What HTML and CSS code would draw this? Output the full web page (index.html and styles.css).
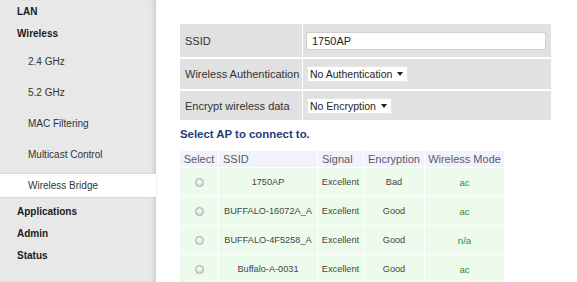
FILE: index.html
```html
<!DOCTYPE html>
<html>
<head>
<meta charset="utf-8">
<link rel="stylesheet" href="styles.css">
</head>
<body>
<div class="page">
  <nav class="sidebar">
    <div class="nav-top">LAN</div>
    <div class="nav-top">Wireless</div>
    <div class="subnav">
      <div class="nav-sub">2.4 GHz</div>
      <div class="nav-sub">5.2 GHz</div>
      <div class="nav-sub">MAC Filtering</div>
      <div class="nav-sub">Multicast Control</div>
      <div class="nav-sub active">Wireless Bridge</div>
    </div>
    <div class="nav-top">Applications</div>
    <div class="nav-top">Admin</div>
    <div class="nav-top">Status</div>
  </nav>
  <main class="main">
    <table class="form">
      <tr class="r1">
        <td class="label">SSID</td>
        <td class="value"><div class="input">1750AP</div></td>
      </tr>
      <tr class="r2">
        <td class="label">Wireless Authentication</td>
        <td class="value"><div class="select sel-auth"><span>No Authentication</span><svg width="6" height="4" viewBox="0 0 6 4"><path d="M0 0H6L3 4Z" fill="#222"/></svg></div></td>
      </tr>
      <tr class="r3">
        <td class="label">Encrypt wireless data</td>
        <td class="value"><div class="select sel-enc"><span>No Encryption</span><svg width="6" height="4" viewBox="0 0 6 4"><path d="M0 0H6L3 4Z" fill="#222"/></svg></div></td>
      </tr>
    </table>
    <h2 class="heading">Select AP to connect to.</h2>
    <table class="aps">
      <colgroup>
        <col class="c-sel"><col class="c-ssid"><col class="c-sig"><col class="c-enc"><col class="c-mode">
      </colgroup>
      <thead>
        <tr><th>Select</th><th class="left">SSID</th><th class="left">Signal</th><th>Encryption</th><th>Wireless Mode</th></tr>
      </thead>
      <tbody>
        <tr><td><span class="radio"></span></td><td>1750AP</td><td>Excellent</td><td>Bad</td><td class="mode">ac</td></tr>
        <tr><td><span class="radio"></span></td><td>BUFFALO-16072A_A</td><td>Excellent</td><td>Good</td><td class="mode">ac</td></tr>
        <tr><td><span class="radio"></span></td><td>BUFFALO-4F5258_A</td><td>Excellent</td><td>Good</td><td class="mode">n/a</td></tr>
        <tr><td><span class="radio"></span></td><td>Buffalo-A-0031</td><td>Excellent</td><td>Good</td><td class="mode">ac</td></tr>
      </tbody>
    </table>
  </main>
</div>
</body>
</html>
```
FILE: styles.css
```css
html, body {
  margin: 0;
  padding: 0;
  background: #fff;
  font-family: "Liberation Sans", Arial, sans-serif;
}
.page {
  display: flex;
  height: 282px;
  overflow: hidden;
}
.sidebar {
  width: 156px;
  flex: none;
  background: #e8e8e8;
  box-shadow: inset -4px 0 4px -2px rgba(0, 0, 0, 0.13);
  padding-top: 1px;
  box-sizing: border-box;
}
.nav-top {
  height: 22px;
  line-height: 22px;
  padding-left: 17px;
  font-size: 10px;
  font-weight: bold;
  color: #1a1a1a;
}
.subnav {
  display: flex;
  flex-direction: column;
  gap: 8px;
  padding: 5px 0 4px;
}
.nav-sub {
  height: 23px;
  line-height: 23px;
  padding-left: 28px;
  font-size: 10px;
  color: #333;
}
.nav-sub.active {
  background: #fff;
  box-shadow: 0 0 2px rgba(0, 0, 0, 0.18);
}
.main {
  flex: 1;
  padding: 22px 0 0 23px;
}
.form {
  border-collapse: separate;
  border-spacing: 1px 2px;
  width: 373px;
}
.form td {
  background: #e1e1e1;
  font-size: 11px;
  color: #333;
  padding: 0;
}
.form .label {
  width: 117px;
  padding-left: 5px;
}
.form .value {
  padding-left: 3px;
}
.form .r1 td { height: 33px; }
.form .r2 td { height: 30px; }
.form .r3 td { height: 29px; }
.input {
  width: 240px;
  height: 18px;
  box-sizing: border-box;
  border: 1px solid #cfcfcf;
  background: #fff;
  line-height: 16px;
  padding-left: 5px;
  color: #222;
}
.select {
  display: flex;
  align-items: center;
  justify-content: space-between;
  gap: 3px;
  height: 16px;
  box-sizing: border-box;
  background: #fff;
  border: 1px solid #e6e6e6;
  padding: 0 4px 0 2px;
  margin-left: 1px;
  color: #222;
  font-size: 10.5px;
  white-space: nowrap;
}
.select span {
  flex: none;
}
.select svg {
  flex: none;
}
.sel-auth { width: 101px; }
.sel-enc { width: 85px; }
.heading {
  margin: 5px 0 0 1px;
  font-size: 11.4px;
  line-height: 14px;
  font-weight: bold;
  color: #1f3c78;
}
.aps {
  margin-top: 9px;
  border-collapse: separate;
  border-spacing: 1px;
  table-layout: fixed;
  width: 326px;
}
.c-sel { width: 38px; }
.c-ssid { width: 98px; }
.c-sig { width: 45px; }
.c-enc { width: 60px; }
.c-mode { width: 79px; }
.aps th {
  background: #f2f2fa;
  font-weight: normal;
  font-size: 11px;
  color: #5a5a66;
  height: 16px;
  padding: 0;
  text-align: center;
}
.aps th.left {
  text-align: left;
  padding-left: 4px;
}
.aps td {
  background: #edfbec;
  height: 28px;
  padding: 0;
  text-align: center;
  font-size: 9.2px;
  color: #444;
  white-space: nowrap;
}
.aps td.mode {
  color: #2f8a2a;
  font-size: 9.6px;
}
.radio {
  display: inline-block;
  width: 9px;
  height: 9px;
  box-sizing: border-box;
  border-radius: 50%;
  border: 1px solid #a9a9a9;
  background: radial-gradient(circle at 50% 35%, #fafafa, #cfcfcf);
  vertical-align: middle;
}
```
